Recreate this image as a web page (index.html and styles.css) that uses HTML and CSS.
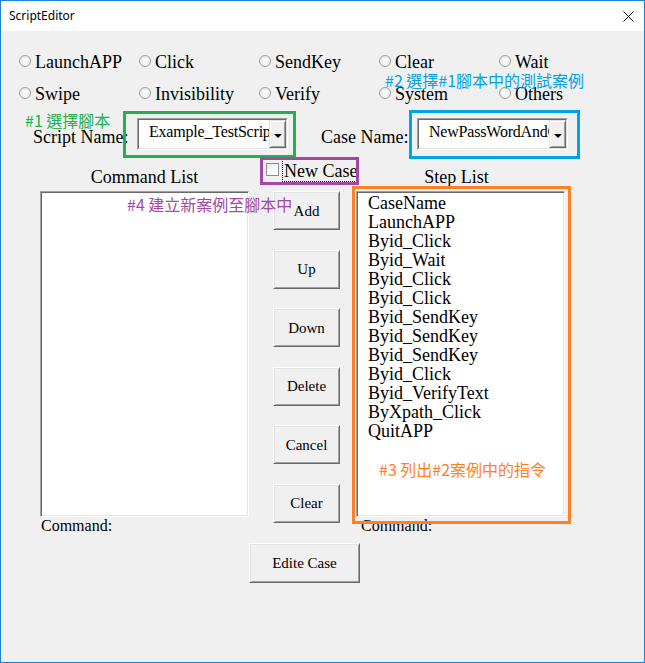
FILE: index.html
```html
<!DOCTYPE html>
<html>
<head>
<meta charset="utf-8">
<title>ScriptEditor</title>
<link rel="stylesheet" href="styles.css">
</head>
<body>
<div class="window">
  <div class="titlebar">
    <span class="title">ScriptEditor</span>
    <svg class="close" width="11" height="11" viewBox="0 0 11 11"><path d="M0.5 0.5 L10.5 10.5 M10.5 0.5 L0.5 10.5" stroke="#000" stroke-width="1" fill="none"/></svg>
  </div>
  <div class="form">
    <div class="radios">
      <label class="radio"><span class="dot"></span>LaunchAPP</label>
      <label class="radio"><span class="dot"></span>Click</label>
      <label class="radio"><span class="dot"></span>SendKey</label>
      <label class="radio"><span class="dot"></span>Clear</label>
      <label class="radio"><span class="dot"></span>Wait</label>
      <label class="radio"><span class="dot"></span>Swipe</label>
      <label class="radio"><span class="dot"></span>Invisibility</label>
      <label class="radio"><span class="dot"></span>Verify</label>
      <label class="radio"><span class="dot"></span>System</label>
      <label class="radio"><span class="dot"></span>Others</label>
    </div>
    <div class="names">
      <span class="lbl lbl-script">Script Name:</span>
      <div class="combo"><div class="combo-in"><span class="combo-text">Example_TestScrip</span><span class="combo-btn"><i class="arrow"></i></span></div></div>
      <span class="lbl lbl-case">Case Name:</span>
      <div class="combo"><div class="combo-in"><span class="combo-text">NewPassWordAndConfirm</span><span class="combo-btn"><i class="arrow"></i></span></div></div>
    </div>
    <div class="workarea">
      <div class="col-title t1">Command List</div>
      <div class="newcase"><span class="check"></span><span class="focus">New Case</span></div>
      <div class="col-title t3">Step List</div>
      <div class="listbox lb1"></div>
      <div class="buttons">
        <button class="btn">Add</button>
        <button class="btn">Up</button>
        <button class="btn">Down</button>
        <button class="btn">Delete</button>
        <button class="btn">Cancel</button>
        <button class="btn">Clear</button>
      </div>
      <div class="listbox lb3">
        <div>CaseName</div>
        <div>LaunchAPP</div>
        <div>Byid_Click</div>
        <div>Byid_Wait</div>
        <div>Byid_Click</div>
        <div>Byid_Click</div>
        <div>Byid_SendKey</div>
        <div>Byid_SendKey</div>
        <div>Byid_SendKey</div>
        <div>Byid_Click</div>
        <div>Byid_VerifyText</div>
        <div>ByXpath_Click</div>
        <div>QuitAPP</div>
      </div>
      <div class="cmd c1">Command:</div>
      <div class="cmd c3">Command:</div>
    </div>
    <div class="footer"><button class="btn btn-wide">Edite Case</button></div>
  </div>

  <div class="mark mark-green"></div>
  <div class="mark mark-blue"></div>
  <div class="mark mark-purple"></div>
  <div class="mark mark-orange"></div>
  <div class="note note-green">#1 選擇腳本</div>
  <div class="note note-blue">#2 選擇#1腳本中的測試案例</div>
  <div class="note note-purple">#4 建立新案例至腳本中</div>
  <div class="note note-orange">#3 列出#2案例中的指令</div>
</div>
</body>
</html>
```

FILE: styles.css
```css
html, body {
  margin: 0;
  padding: 0;
  background: #f0f0f0;
}
.window {
  position: relative;
  width: 645px;
  height: 663px;
  box-sizing: border-box;
  border: 1px solid #1883d7;
  background: #f0f0f0;
  overflow: hidden;
  font-family: "Liberation Serif", "Times New Roman", serif;
  color: #000;
}
.titlebar {
  height: 30px;
  background: #fff;
  display: flex;
  align-items: center;
  justify-content: space-between;
  padding: 0 10px 0 8px;
}
.title {
  font-family: "Noto Sans", "Open Sans", sans-serif;
  font-size: 12px;
  line-height: 16px;
}
.close {
  display: block;
}
.form {
  padding: 21px 0 0 18px;
}
.radios {
  display: grid;
  grid-template-columns: repeat(5, 120px);
  grid-auto-rows: 20px;
  row-gap: 12px;
}
.radio {
  display: flex;
  align-items: flex-start;
  font-size: 18px;
  line-height: 20px;
  white-space: nowrap;
}
.dot {
  width: 12px;
  height: 12px;
  box-sizing: border-box;
  border-radius: 50%;
  border: 1px solid #9c9c9c;
  background: radial-gradient(circle at 60% 60%, #ffffff 0%, #f4f4f4 45%, #dcdcdc 100%);
  margin: 3px 4px 0 0;
  flex: none;
}
.names {
  display: flex;
  align-items: flex-start;
  margin-top: 14px;
  height: 32px;
}
.lbl {
  font-size: 18px;
  line-height: 20px;
  margin-top: 9px;
  white-space: nowrap;
}
.lbl-script {
  margin-left: 14px;
  width: 104px;
}
.lbl-case {
  margin-left: 33px;
  width: 96px;
}
.combo {
  width: 151px;
  height: 32px;
  box-sizing: border-box;
  border-top: 1px solid #a0a0a0;
  border-left: 1px solid #a0a0a0;
  border-right: 1px solid #ffffff;
  border-bottom: 1px solid #ffffff;
  flex: none;
}
.combo-in {
  height: 100%;
  box-sizing: border-box;
  border-top: 1px solid #696969;
  border-left: 1px solid #696969;
  border-right: 1px solid #e3e3e3;
  border-bottom: 1px solid #e3e3e3;
  background: #fff;
  display: flex;
}
.combo-text {
  flex: 1;
  overflow: hidden;
  white-space: nowrap;
  font-size: 16px;
  line-height: 24px;
  padding-left: 10px;
  letter-spacing: -0.2px;
}
.combo-btn {
  width: 17px;
  flex: none;
  box-sizing: border-box;
  background: #f0f0f0;
  border-top: 1px solid #e3e3e3;
  border-left: 1px solid #e3e3e3;
  border-right: 1px solid #696969;
  border-bottom: 1px solid #696969;
  box-shadow: inset 1px 1px 0 #fff, inset -1px -1px 0 #a0a0a0;
  display: flex;
  align-items: center;
  justify-content: center;
}
.arrow {
  width: 0;
  height: 0;
  border-left: 4px solid transparent;
  border-right: 4px solid transparent;
  border-top: 4px solid #000;
  margin-top: 3px;
}
.workarea {
  display: grid;
  grid-template-columns: 209px 107px 209px;
  grid-template-rows: 41px 326px 18px;
  margin-left: 21px;
}
.col-title {
  font-size: 18px;
  line-height: 20px;
  text-align: center;
  align-self: start;
  margin-top: 17px;
  white-space: nowrap;
}
.t1 { grid-column: 1; grid-row: 1; }
.t3 { grid-column: 3; grid-row: 1; margin-right: 8px; }
.newcase {
  grid-column: 2;
  grid-row: 1;
  display: flex;
  align-items: flex-start;
  padding-left: 17px;
  margin-top: 8px;
  white-space: nowrap;
}
.check {
  width: 13px;
  height: 13px;
  box-sizing: border-box;
  border: 1px solid #8e8e8e;
  background: linear-gradient(135deg, #e6e6e6 0%, #ffffff 70%);
  margin-top: 5px;
  margin-right: 3px;
  flex: none;
}
.focus {
  border: 1px dotted #000;
  font-size: 18px;
  line-height: 20px;
  padding: 2px 1px 0 1px;
}
.listbox {
  grid-row: 2;
  box-sizing: border-box;
  background: #fff;
  border-top: 1px solid #a0a0a0;
  border-left: 1px solid #a0a0a0;
  border-right: 1px solid #fff;
  border-bottom: 1px solid #fff;
  box-shadow: inset 1px 1px 0 #696969, inset -1px -1px 0 #e3e3e3;
}
.lb1 { grid-column: 1; }
.lb3 {
  grid-column: 3;
  padding: 2px 0 0 11px;
  font-size: 18px;
  line-height: 19px;
  white-space: nowrap;
}
.buttons {
  grid-column: 2;
  grid-row: 2 / span 2;
  align-self: start;
  display: flex;
  flex-direction: column;
  gap: 19.6px;
  padding-left: 24px;
}
.btn {
  width: 67px;
  height: 39px;
  box-sizing: border-box;
  margin: 0;
  padding: 1px 0 0 0;
  background: #f0f0f0;
  border-top: 1px solid #fff;
  border-left: 1px solid #fff;
  border-right: 1px solid #696969;
  border-bottom: 1px solid #696969;
  box-shadow: inset 1px 1px 0 #e3e3e3, inset -1px -1px 0 #a0a0a0;
  font-family: "Liberation Serif", "Times New Roman", serif;
  font-size: 15px;
  color: #000;
  text-align: center;
}
.btn-wide {
  width: 111px;
  height: 40px;
}
.cmd {
  grid-row: 3;
  font-family: "Liberation Serif", "Times New Roman", serif;
  font-size: 16px;
  line-height: 18px;
  white-space: nowrap;
}
.c1 { grid-column: 1; padding-left: 1px; }
.c3 { grid-column: 3; padding-left: 5px; }
.footer {
  margin-top: 8px;
  padding-left: 230px;
}
.mark {
  position: absolute;
  box-sizing: border-box;
  border: 3px solid;
}
.mark-green { left: 122px; top: 110px; width: 173px; height: 47px; border-color: #22b14c; }
.mark-blue { left: 408px; top: 109px; width: 171px; height: 49px; border-color: #00a2e8; }
.mark-purple { left: 259px; top: 156px; width: 99px; height: 28px; border-color: #a349a4; }
.mark-orange { left: 351px; top: 185px; width: 219px; height: 338px; border-color: #ff7f27; }
.note {
  position: absolute;
  font-family: "Noto Sans CJK TC", "Noto Sans", sans-serif;
  font-size: 16px;
  line-height: 16px;
  white-space: nowrap;
}
.note-green { left: 24px; top: 111px; color: #22b14c; }
.note-blue { left: 384px; top: 71px; color: #00a2e8; }
.note-purple { left: 126px; top: 195px; color: #a349a4; }
.note-orange { left: 378px; top: 460px; color: #ff7f27; }
```
